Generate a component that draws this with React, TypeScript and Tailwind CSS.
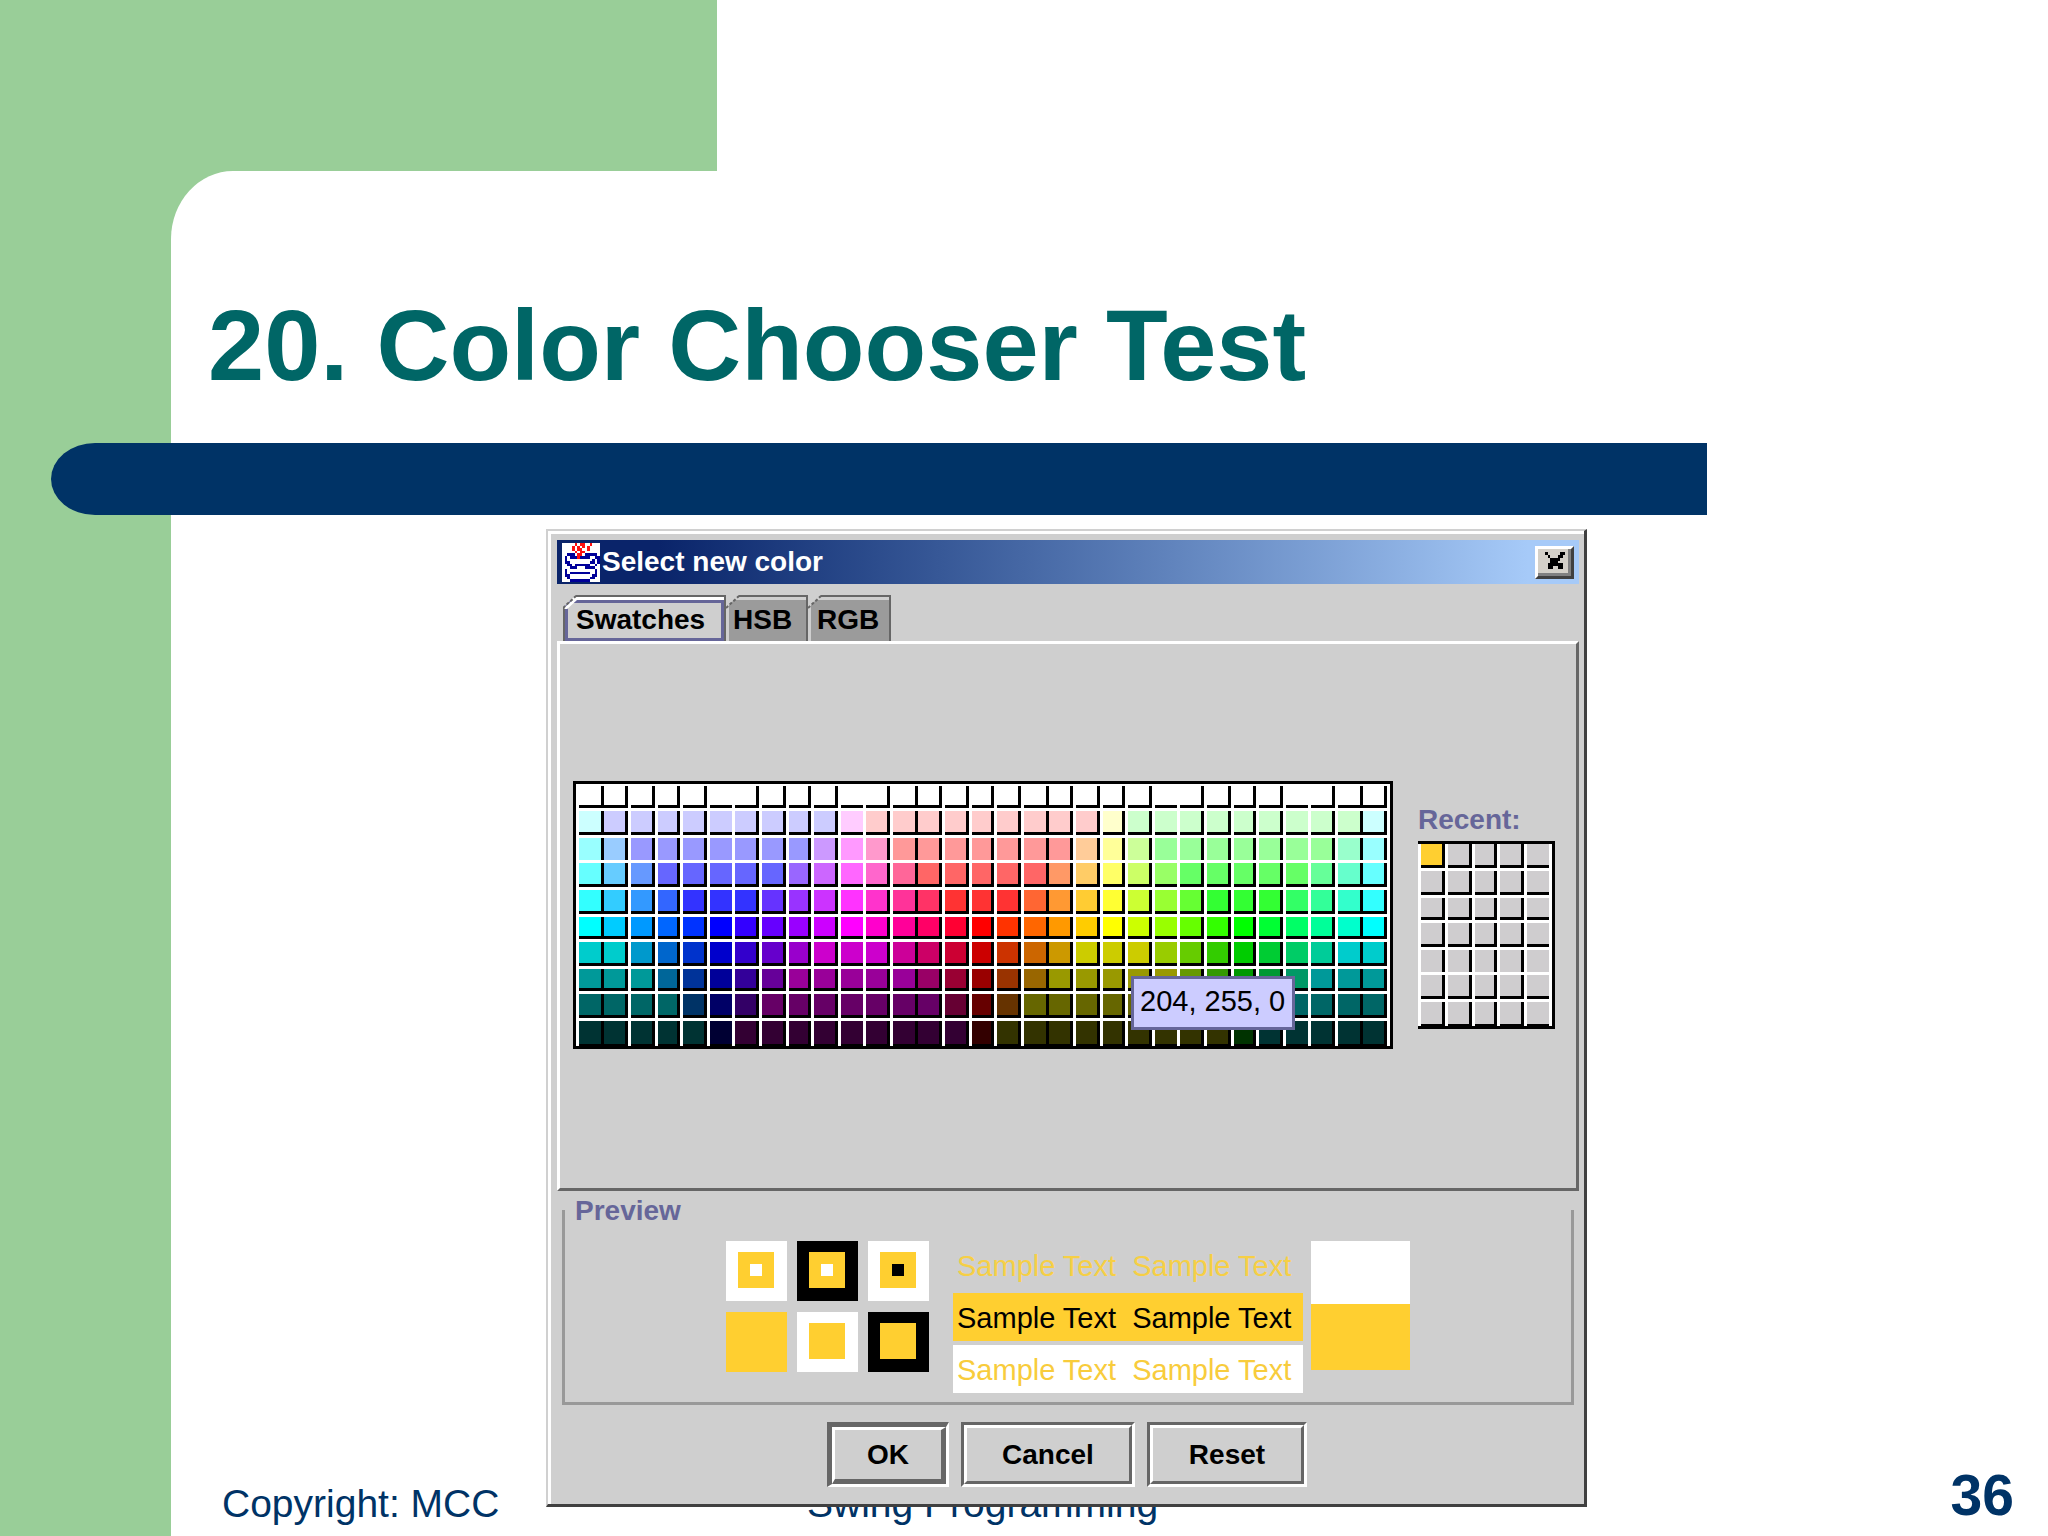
import React from "react";

const PALETTE: string[][] = [
  "fff*31",
  "cff ccf*9 fcf fcc*9 ffc cfc*9 cff",
  "9ff 9cf 99f*7 c9f f9f f9c f99*7 fc9 ff9 cf9 9f9*7 9fc 9ff",
  "6ff 6cf 69f 66f*5 96f c6f f6f f6c f69 f66*5 f96 fc6 ff6 cf6 9f6 6f6*5 6f9 6fc 6ff",
  "3ff 3cf 39f 36f 33f*3 63f 93f c3f f3f f3c f39 f36 f33*3 f63 f93 fc3 ff3 cf3 9f3 6f3 3f3*3 3f6 3f9 3fc 3ff",
  "0ff 0cf 09f 06f 03f 00f 30f 60f 90f c0f f0f f0c f09 f06 f03 f00 f30 f60 f90 fc0 ff0 cf0 9f0 6f0 3f0 0f0 0f3 0f6 0f9 0fc 0ff",
  "0cc*2 09c 06c 03c 00c 30c 60c 90c c0c*3 c09 c06 c03 c00 c30 c60 c90 cc0*3 9c0 6c0 3c0 0c0 0c3 0c6 0c9 0cc*2",
  "099*3 069 039 009 309 609 909*5 906 903 900 930 960 990*5 690 390 090 093 096 099*3",
  "066*4 036 006 306 606*7 603 600 630 660*7 360 060 063 066*4",
  "033*5 003 303*9 300 330*9 030 033*5",
].map((row) =>
  row.split(" ").flatMap((run) => {
    const [color, count] = run.split("*");
    return Array<string>(Number(count ?? 1)).fill("#" + color);
  }),
);

const COLUMNS = [25, 27, 27, 25, 27, 25, 27, 27, 25, 27, 25, 27, 25, 27, 27, 25, 27, 25, 27, 27, 25, 27, 25, 27, 27, 25, 27, 25, 27, 25, 27];
const ROWS = [25, 27, 25, 27, 27, 25, 27, 25, 27, 25];
const RECENT_COLUMNS = [27, 27, 25, 27, 25];
const RECENT_ROWS = [27, 27, 25, 27, 25, 27, 24];

const px = (sizes: number[]) => sizes.map((s) => s + "px").join(" ");

function cellEdges(col: number, row: number) {
  const right = [0, 12, 17, 29].includes(col)
    ? "border-r-[3px]"
    : [5, 10, 22, 27].includes(col)
      ? "mr-[3px]"
      : "border-r-[3px] mr-[3px]";
  const bottom = row === 9 ? "border-b-2" : row === 2 ? "mb-[3px]" : "border-b-[3px] mb-[3px]";
  return right + " " + bottom;
}

function SwatchGrid() {
  return (
    <div className="relative">
      <div
        className="grid border-[3px] border-black bg-white pt-[2px] pl-[3px]"
        style={{ gridTemplateColumns: px(COLUMNS), gridTemplateRows: px(ROWS) }}
      >
        {PALETTE.flatMap((row, r) =>
          row.map((color, c) => (
            <button
              key={r + "-" + c}
              type="button"
              aria-label={color}
              className={"border-black " + cellEdges(c, r)}
              style={{ backgroundColor: color }}
            />
          )),
        )}
      </div>
      <div
        role="tooltip"
        className="absolute top-[195px] left-[558px] h-[54px] w-[164px] border-[3px] border-[#666699] bg-[#ccccff] pt-[6px] pl-[6px] text-[29px] leading-8 whitespace-pre text-black"
      >
        204, 255, 0
      </div>
    </div>
  );
}

function RecentGrid() {
  return (
    <div className="flex flex-col gap-[5px] self-end pb-[20px]">
      <h3 className="font-bold leading-8 text-[#666699]">Recent:</h3>
      <div
        className="grid border-t-[3px] border-r-[3px] border-b-[3px] border-black bg-white pl-[3px]"
        style={{ gridTemplateColumns: px(RECENT_COLUMNS), gridTemplateRows: px(RECENT_ROWS) }}
      >
        {RECENT_ROWS.flatMap((_, r) =>
          RECENT_COLUMNS.map((_, c) => (
            <button
              key={r + "-" + c}
              type="button"
              aria-label={"Recent color " + (r * 5 + c + 1)}
              className={
                "mr-[3px] border-black " +
                (c === 4 ? "" : "border-r-[3px] ") +
                (r === 4 ? "mb-[3px] " : r === 6 ? "border-b-2 " : "mb-[3px] border-b-[3px] ") +
                (r + c === 0 ? "bg-[#ffcf30]" : "bg-[#cfcdcf]")
              }
            />
          )),
        )}
      </div>
    </div>
  );
}

const JAVA_CUP = [
  ".....r.rr..r...",
  "....r.r.r.r....",
  "....r.rr..r....",
  ".....r.rr......",
  "..bbb.rr.bbbbb.",
  ".b.bbbrbbbb..bb",
  ".b..........b.b",
  ".bb........bb.b",
  "..bb.bbbbbb..b.",
  "...bbb...bbbb..",
  ".b...........b.",
  ".b.bbbbbbbb..b.",
  ".bb.........bb.",
  "..b........bb..",
  "...bbbbbbbb....",
];

function JavaIcon() {
  return (
    <svg viewBox="0 0 15 15" preserveAspectRatio="none" className="h-[39px] w-[38px] shrink-0 bg-white" shapeRendering="crispEdges" aria-hidden="true">
      {JAVA_CUP.flatMap((row, y) =>
        [...row].map((c, x) =>
          c === "." ? null : <rect key={x + "-" + y} x={x} y={y} width={1} height={1} fill={c === "r" ? "#ff1010" : "#000099"} />,
        ),
      )}
    </svg>
  );
}

function TitleBar() {
  return (
    <header className="flex h-[44px] items-center bg-linear-to-r from-[#0a246a] from-10% to-[#a6caf8] to-95% pr-[5px] pl-[5px]">
      <JavaIcon />
      <h2 className="pl-[2px] font-bold leading-8 text-white">Select new color</h2>
      <button
        type="button"
        aria-label="Close"
        className="ml-auto flex h-[33px] w-[39px] items-center justify-center border-[3px] border-t-white border-r-[#404040] border-b-[#404040] border-l-white bg-[#d4d0c8] shadow-[inset_-3px_-3px_0_#808080]"
      >
        <svg viewBox="0 0 8 6" preserveAspectRatio="none" className="mb-[3px] h-[17px] w-[20px]" shapeRendering="crispEdges" aria-hidden="true">
          <path d="M0 0h1v1H0zM6 0h2v1H6zM1 1h1v1H1zM5 1h2v1H5zM2 2h4v1H2zM2 3h3v1H2zM1 4h2v2H1zM3 4h2v1H3zM5 4h2v2H5z" fill="#000" />
        </svg>
      </button>
    </header>
  );
}

/* Cut-off top left corner of a tab */
function TabCorner({ selected }: { selected?: boolean }) {
  return (
    <svg
      width="14"
      height="14"
      viewBox="0 0 14 14"
      className={selected ? "absolute -top-[2px] -left-[2px]" : "absolute -top-[2px] left-0"}
      aria-hidden="true"
    >
      <path d="M0 0H13L0 13Z" fill="#cfcfcf" />
      {selected && <path d="M2 14L14 3" stroke="#fff" strokeWidth="3" />}
      <path d="M0 13L13 1" stroke="#666" strokeWidth="2" strokeDasharray="3 2" />
    </svg>
  );
}

function Tabs() {
  return (
    <div role="tablist" className="flex pt-[11px] pl-[6px] font-bold leading-8 text-black">
      <button
        role="tab"
        type="button"
        aria-selected="true"
        className="relative h-[46px] w-[163px] border-t-2 border-r-2 border-l-2 border-[#666]"
      >
        <span className="block h-[44px] border-t-[3px] border-white">
          <span className="block h-[41px] border-[3px] border-[#666699] pt-px pl-[8px] text-left">Swatches</span>
        </span>
        <TabCorner selected />
      </button>
      <button
        role="tab"
        type="button"
        aria-selected="false"
        className="relative h-[46px] w-[82px] border-t-2 border-r-2 border-[#666] bg-[#9b9b9b]"
      >
        <span className="block h-[44px] border-t-[3px] border-l-[3px] border-[#cfcfcf] pt-1 pl-[4px] text-left">HSB</span>
        <TabCorner />
      </button>
      <button
        role="tab"
        type="button"
        aria-selected="false"
        className="relative h-[46px] w-[83px] border-t-2 border-r-2 border-[#666] bg-[#9b9b9b]"
      >
        <span className="block h-[44px] border-t-[3px] border-l-[3px] border-[#cfcfcf] pt-1 pl-[6px] text-left">RGB</span>
        <TabCorner />
      </button>
    </div>
  );
}

function Chip({ outer, inner, hole }: { outer: string; inner?: string; hole?: string }) {
  return (
    <div className={"flex h-[60px] w-[61px] items-center justify-center pr-[2px] pb-[2px] " + outer}>
      {inner && (
        <div className={"flex size-[36px] items-center justify-center " + inner}>{hole && <div className={"size-3 " + hole} />}</div>
      )}
    </div>
  );
}

const SAMPLE = "Sample Text  Sample Text";

function Preview() {
  return (
    <section className="mt-[19px] mr-[5px] ml-[5px] flow-root border-r-[3px] border-b-[3px] border-l-[3px] border-[#999] pb-[9px]">
      <h3 className="-mt-[15px] pl-[10px] font-bold leading-8 text-[#666699]">Preview</h3>
      <div className="mt-[14px] flex pl-[161px]">
        <div className="grid grid-cols-3 content-start gap-x-[10px] gap-y-[11px]">
          <Chip outer="bg-white" inner="bg-[#ffcf30]" hole="bg-white" />
          <Chip outer="bg-black" inner="bg-[#ffcf30]" hole="bg-white" />
          <Chip outer="bg-white" inner="bg-[#ffcf30]" hole="bg-black" />
          <Chip outer="bg-[#ffcf30]" />
          <Chip outer="bg-white" inner="bg-[#ffcf30]" />
          <Chip outer="bg-black" inner="bg-[#ffcf30]" />
        </div>
        <div className="ml-6 flex w-[350px] flex-col gap-1 text-[29px] leading-8 whitespace-pre">
          <p className="h-12 pt-[9px] pl-[4px] text-[#f6cf45]">{SAMPLE}</p>
          <p className="h-12 bg-[#ffcf30] pt-[9px] pl-[4px] text-black">{SAMPLE}</p>
          <p className="h-12 bg-white pt-[9px] pl-[4px] text-[#f8cc3c]">{SAMPLE}</p>
        </div>
        <div className="ml-[8px] w-[99px]">
          <div className="h-[63px] bg-white" />
          <div className="h-[66px] bg-[#ffcf30]" />
        </div>
      </div>
    </section>
  );
}

function DialogButtons() {
  return (
    <div className="mt-[17px] flex h-[65px] justify-center gap-3 pr-[2px] font-bold text-black">
      <button
        type="button"
        className="w-[122px] border-t-[5px] border-r-[3px] border-b-[3px] border-l-[5px] border-t-[#666] border-r-white border-b-white border-l-[#666]"
      >
        <span className="flex h-full items-center justify-center border-t-[3px] border-r-[5px] border-b-[5px] border-l-[3px] border-t-white border-r-[#666] border-b-[#666] border-l-white">
          OK
        </span>
      </button>
      <button type="button" className="w-[174px] border-[3px] border-t-[#666] border-r-white border-b-white border-l-[#666]">
        <span className="flex h-full items-center justify-center border-[3px] border-t-white border-r-[#666] border-b-[#666] border-l-white">
          Cancel
        </span>
      </button>
      <button type="button" className="w-[160px] border-[3px] border-t-[#666] border-r-white border-b-white border-l-[#666]">
        <span className="flex h-full items-center justify-center border-[3px] border-t-white border-r-[#666] border-b-[#666] border-l-white">
          Reset
        </span>
      </button>
    </div>
  );
}

function ColorDialog() {
  return (
    <section
      role="dialog"
      aria-label="Select new color"
      className="relative z-10 mt-[14px] mr-[461px] ml-[375px] border-t-2 border-r-[3px] border-b-[3px] border-l-2 border-t-[#d0d0d0] border-r-[#404040] border-b-[#404040] border-l-[#d0d0d0] bg-[#cfcfcf] text-[28px]"
    >
      <div className="border-t-[3px] border-l-[3px] border-white pt-[6px] pr-[5px] pb-[17px] pl-[6px]">
        <TitleBar />
        <Tabs />
        <div
          role="tabpanel"
          className="flex gap-[25px] border-[3px] border-t-white border-r-[#666] border-b-[#666] border-l-white pt-[137px] pb-[139px] pl-[13px]"
        >
          <SwatchGrid />
          <RecentGrid />
        </div>
        <Preview />
        <DialogButtons />
      </div>
    </section>
  );
}

export default function App() {
  return (
    <main className="flex min-h-screen flex-col bg-[#99ce98] font-['Liberation_Sans',Arial,sans-serif]">
      <div className="flex h-[171px]">
        <div className="w-[35%]" />
        <div className="flex-1 bg-white" />
      </div>
      <div className="flex flex-1">
        <div className="w-[171px] shrink-0" />
        <div className="min-w-0 flex-1 rounded-tl-[62px_68px] bg-white pt-[117px] text-[#003366]">
          <h1 className="pl-[37px] text-[101px] leading-[114px] font-bold text-[#006666]">20. Color Chooser Test</h1>
          <div className="mt-[41px] mr-[341px] -ml-[120px] h-[72px] rounded-l-[44px_36px] bg-[#003366]" />
          <ColorDialog />
          <footer className="-mt-[45px] flex h-[74px] items-end pr-[34px] pb-[9px] pl-[51px] text-[39px] leading-[46px]">
            <p className="w-[585px]">Copyright: MCC</p>
            <p className="flex-1">Swing Programming</p>
            <p className="text-[57px] leading-[64px] font-bold">36</p>
          </footer>
        </div>
      </div>
    </main>
  );
}
